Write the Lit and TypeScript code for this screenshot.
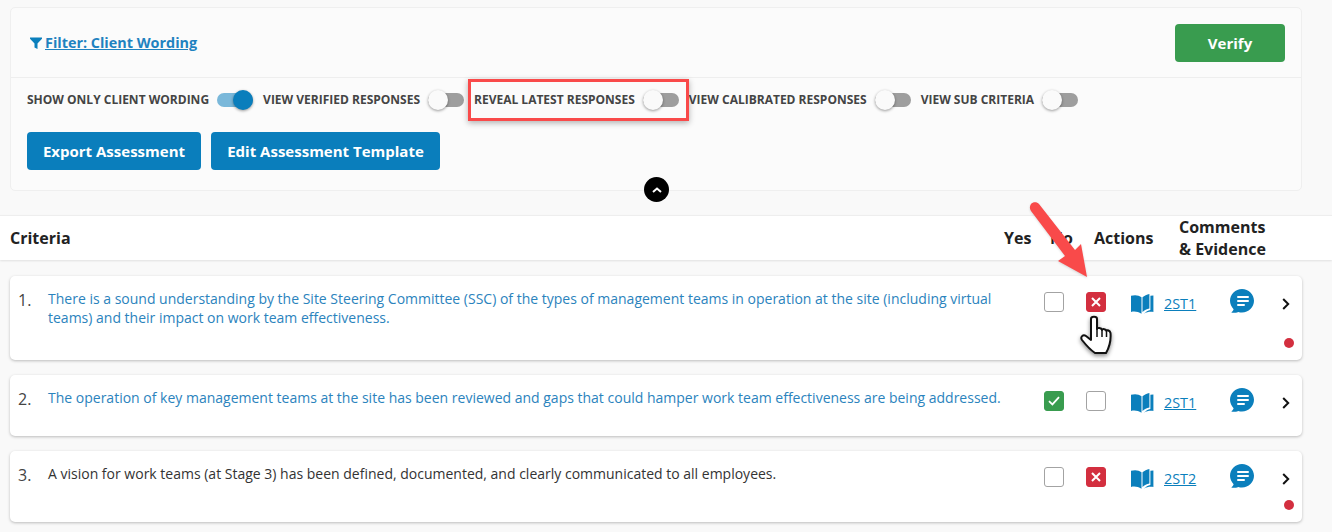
import { LitElement, html, css } from "lit";
import { customElement } from "lit/decorators.js";

const book = html`<svg class="book" viewBox="0 0 24 20" width="24" height="20"><path fill="#0b7fbc" d="M1 1.800C4.500 .6 8.800 1 11.500 3.200V19.800C8 17.600 4.500 17.200 1 18Z"/><path fill="#0b7fbc" d="M12.500 3.200C14.400 1.800 16.800 .6 19.400 0V14.600C16.800 15.200 14.400 16.400 12.500 18Z"/><path fill="#0b7fbc" d="M20.400 1.800L23.400 1.400V18C20 17.600 16.600 18 13.800 19.800C15.800 17.800 18 16.600 20.400 16Z"/></svg>`;
const bubble = html`<svg class="bubble" viewBox="0 0 24 24" width="24" height="24"><path fill="#0b7fbc" d="M12 0C18.600 0 24 5.300 24 11.800S18.600 23.600 12 23.600C10.700 23.600 9.400 23.400 8.200 23C6.400 23.800 3.800 24 1.800 23.800C1.400 23.700 1.400 23.300 1.700 23C2.600 22.200 3.400 21.200 3.600 20.200C1.400 18 0 15 0 11.800C0 5.300 5.400 0 12 0Z"/><path stroke="#fff" stroke-width="2" stroke-linecap="round" d="M8 8H18M8 12H18M8 16H14"/></svg>`;
const chevron = html`<svg class="chev" viewBox="0 0 8 12" width="8" height="12"><path fill="none" stroke="#111" stroke-width="2" d="M1.200 1L6.200 6L1.200 11"/></svg>`;

type Box = "none" | "yes" | "no";
interface Row { n: string; text: string; blue: boolean; yes: Box; no: Box; code: string; dot: boolean; cls: string; }
const rows: Row[] = [
  { n: "1.", text: "There is a sound understanding by the Site Steering Committee (SSC) of the types of management teams in operation at the site (including virtual teams) and their impact on work team effectiveness.", blue: true, yes: "none", no: "no", code: "2ST1", dot: true, cls: "h1" },
  { n: "2.", text: "The operation of key management teams at the site has been reviewed and gaps that could hamper work team effectiveness are being addressed.", blue: true, yes: "yes", no: "none", code: "2ST1", dot: false, cls: "h2" },
  { n: "3.", text: "A vision for work teams (at Stage 3) has been defined, documented, and clearly communicated to all employees.", blue: false, yes: "none", no: "no", code: "2ST2", dot: true, cls: "h3" },
];

@customElement("app-root")
export class AppRoot extends LitElement {
  static styles = css`
    :host { display: block; position: relative; width: 1332px; height: 532px; overflow: hidden; background: #f9f9f9; font-family: "Open Sans", sans-serif; color: #222; }
    * { box-sizing: border-box; }
    .panel { position: relative; margin: 7px 30px 0 10px; height: 184px; background: #fbfbfb; border: 1px solid #efefef; border-radius: 5px; }
    .top { height: 70px; display: flex; align-items: center; justify-content: space-between; padding: 0 16px 0 19px; border-bottom: 1px solid #eeeeee; }
    .filter { display: flex; align-items: center; gap: 3px; color: #1f82c0; font-size: 14.4px; font-weight: 700; text-decoration: underline; }
    .btn { display: flex; align-items: center; justify-content: center; border: 0; border-radius: 4px; color: #fff; font: 700 15px "Open Sans", sans-serif; height: 38px; background: #0a7ebc; }
    .verify { width: 110px; background: #399c4f; }
    .toggles { display: flex; align-items: center; height: 44px; padding-left: 16px; }
    .tg-label { font-size: 12px; font-weight: 700; color: #444; text-transform: uppercase; white-space: nowrap; padding-bottom: 2px; }
    .toggle { position: relative; width: 36px; height: 14px; border-radius: 7px; background: #9e9e9e; margin: 0 10px 0 8px; flex: none; }
    .toggle::after { content: ""; position: absolute; left: 0; top: -3px; width: 20px; height: 20px; border-radius: 50%; background: #fafafa; box-shadow: 0 1px 3px rgba(0,0,0,.4); }
    .toggle.on { background: #7ab8da; }
    .toggle.on::after { left: 16px; background: #0a7ebc; }
    .actions { display: flex; gap: 10px; padding: 10px 0 0 16px; }
    .export { width: 174px; }
    .edit { width: 229px; }
    .collapse { position: absolute; left: 50%; bottom: -12px; margin-left: -12px; width: 25px; height: 25px; border-radius: 50%; background: #000; display: flex; align-items: center; justify-content: center; }
    .head { margin-top: 24px; height: 45px; background: #fff; border-top: 1px solid #eee; box-shadow: 0 1px 2px rgba(0,0,0,.1); position: relative; display: grid; grid-template-columns: 994px 46px 44px 85px 1fr; align-items: center; padding: 0 0 1px 10px; font-size: 16px; font-weight: 700; color: #222; line-height: 22px; }
    .list { display: flex; flex-direction: column; gap: 15px; margin: 16px 30px 0 10px; }
    .card { position: relative; display: grid; grid-template-columns: 30px 1fr 42px 44px 34px 66px 52px 20px; align-items: start; padding: 13px 0 0 8px; background: #fff; border-radius: 5px; box-shadow: 0 1px 3px rgba(0,0,0,.25); }
    .h1 { height: 84px; } .h2 { height: 61px; } .h3 { height: 71px; }
    .num { font-size: 16px; line-height: 21px; color: #444; padding-top: 1px; }
    .txt { font-size: 14px; line-height: 19px; color: #333; padding-right: 40px; }
    .txt.blue { color: #2b83bd; }
    .box { width: 20px; height: 20px; margin-top: 3px; border-radius: 3px; border: 1px solid #a3a3a3; background: #fff; display: flex; align-items: center; justify-content: center; }
    .box.yes { background: #399c4f; border-color: #399c4f; }
    .box.no { background: #d32f3f; border-color: #d32f3f; }
    .book { display: block; margin-top: 5px; }
    .code { color: #0b7fbc; font-size: 14.4px; font-weight: 400; text-decoration: underline; line-height: 19px; margin-top: 5px; }
    .bubble { display: block; }
    .chev { display: block; margin-top: 9px; }
    .dot { position: absolute; right: 8px; bottom: 12px; width: 10px; height: 10px; border-radius: 50%; background: #d32f3f; }
    .mark { position: absolute; pointer-events: none; }
    .redbox { left: 468px; top: 79px; width: 221px; height: 42px; border: 3px solid #f94a4a; box-shadow: 0 2px 6px rgba(0,0,0,.3); }
    .arrow { left: 1020px; top: 190px; filter: drop-shadow(0 1px 1px rgba(0,0,0,.15)); }
    .hand { left: 1078px; top: 314px; filter: drop-shadow(0 2px 2px rgba(0,0,0,.45)); }
  `;

  private box(b: Box) {
    if (b === "yes") return html`<div class="box yes"><svg viewBox="0 0 12 10" width="12" height="10"><path fill="none" stroke="#fff" stroke-width="1.800" d="M1 5.200L4.400 8.400L11 1.200"/></svg></div>`;
    if (b === "no") return html`<div class="box no"><svg viewBox="0 0 10 10" width="10" height="10"><path fill="none" stroke="#fff" stroke-width="2" d="M1 1L9 9M9 1L1 9"/></svg></div>`;
    return html`<div class="box"></div>`;
  }

  render() {
    const tg = (l: string, on = false) => html`<span class="tg-label">${l}</span><span class="toggle ${on ? "on" : ""}"></span>`;
    return html`
      <div class="panel">
        <div class="top">
          <div class="filter"><svg viewBox="0 0 12 12" width="12" height="12"><path fill="#0b7fbc" d="M0 .5H12V1.800L7.500 6.500V12L4.500 10.500V6.500L0 1.800Z"/></svg><span>Filter: Client Wording</span></div>
          <div class="btn verify">Verify</div>
        </div>
        <div class="toggles">
          ${tg("Show only client wording", true)}${tg("View verified responses")}${tg("Reveal latest responses")}${tg("View calibrated responses")}${tg("View sub criteria")}
        </div>
        <div class="actions">
          <div class="btn export">Export Assessment</div>
          <div class="btn edit">Edit Assessment Template</div>
        </div>
        <div class="collapse"><svg viewBox="0 0 10 6" width="10" height="6"><path fill="none" stroke="#fff" stroke-width="2" d="M1 5L5 1.500L9 5"/></svg></div>
      </div>
      <div class="head">
        <span>Criteria</span><span>Yes</span><span>No</span><span>Actions</span><span>Comments<br />&amp; Evidence</span>
      </div>
      <div class="list">
        ${rows.map((r) => html`
          <div class="card ${r.cls}">
            <div class="num">${r.n}</div>
            <div class="txt ${r.blue ? "blue" : ""}">${r.text}</div>
            ${this.box(r.yes)}
            ${this.box(r.no)}
            ${book}
            <div class="code">${r.code}</div>
            ${bubble}
            ${chevron}
            ${r.dot ? html`<span class="dot"></span>` : ""}
          </div>`)}
      </div>
      <div class="mark redbox"></div>
      <svg class="mark arrow" width="80" height="95" viewBox="0 0 80 95"><path fill="#f94a4a" d="M11 14C13 11.500 17 11.500 19 14L55 60L61 54L67 87L38 71L45 66L11 21C9.500 18.500 9.500 16.500 11 14Z"/></svg>
      <svg class="mark hand" width="36" height="44" viewBox="0 0 36 44"><path fill="#fff" stroke="#111" stroke-width="2" stroke-linejoin="round" d="M13 5C13 2 19 2 19 5V15C19 13.500 23.500 13.500 24 16C24.500 14.500 28 15 28.500 17C29 15.500 32 16.500 32.500 19C33 25 32 32 28 39H17C14 37 8 31 4 26C2 23 5 20 8 22L13 26Z"/><path fill="none" stroke="#111" stroke-width="1.500" d="M19 15V23M24 16V23M28.500 17V23"/></svg>
    `;
  }
}
